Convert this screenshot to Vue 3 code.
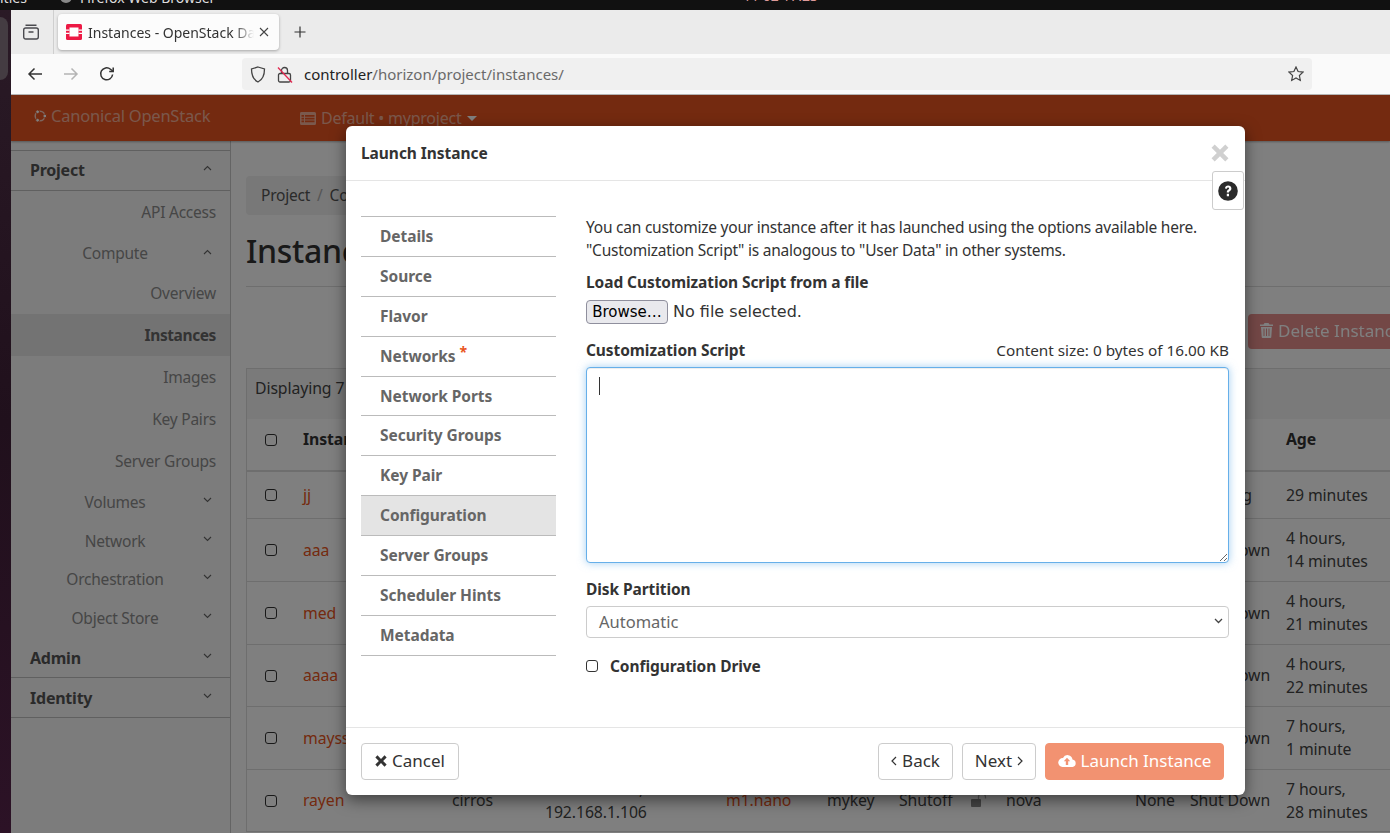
<script setup>
const sideItems = [
  { label: 'API Access', h: 42, kind: 'leaf' },
  { label: 'Compute', h: 40, kind: 'group', open: true },
  { label: 'Overview', h: 41, kind: 'leaf low' },
  { label: 'Instances', h: 42, kind: 'leaf active' },
  { label: 'Images', h: 42, kind: 'leaf' },
  { label: 'Key Pairs', h: 42, kind: 'leaf' },
  { label: 'Server Groups', h: 42, kind: 'leaf' },
  { label: 'Volumes', h: 39, kind: 'group' },
  { label: 'Network', h: 39, kind: 'group' },
  { label: 'Orchestration', h: 39, kind: 'group low' },
  { label: 'Object Store', h: 39, kind: 'group low' }
]
const steps = ['Details', 'Source', 'Flavor', 'Networks', 'Network Ports', 'Security Groups', 'Key Pair', 'Configuration', 'Server Groups', 'Scheduler Hints', 'Metadata']
const rows = [
  { name: 'jj', h: 47, power: 'Running', age: ['29 minutes'] },
  { name: 'aaa', h: 63, power: 'Shut Down', age: ['4 hours,', '14 minutes'] },
  { name: 'med', h: 63, power: 'Shut Down', age: ['4 hours,', '21 minutes'] },
  { name: 'aaaa', h: 62, power: 'Shut Down', age: ['4 hours,', '22 minutes'] },
  { name: 'mayss', h: 63, power: 'Shut Down', age: ['7 hours,', '1 minute'] },
  { name: 'rayen', h: 62, power: 'Shut Down', age: ['7 hours,', '28 minutes'], full: true }
]
</script>

<template>
  <div class="screen">
    <div class="sysbar">
      <span class="sys-a">ities</span>
      <span class="sys-dot"></span>
      <span class="sys-b">Firefox Web Browser</span>
      <span class="sys-c">11 02 17:23</span>
    </div>
    <div class="desk">
      <div class="dock"><div class="dock-item"></div></div>
      <div class="browser">
        <div class="tabs">
          <button class="view-btn" aria-label="Firefox View">
            <svg width="18" height="18" viewBox="0 0 18 18" fill="none" stroke="#4a4a4f" stroke-width="1.4"><rect x="1.700" y="5" width="14.600" height="11" rx="2"/><path d="M3.500 2.200h11M6.500 9h5"/></svg>
          </button>
          <div class="tab">
            <svg class="favicon" width="16" height="16" viewBox="0 0 16 16"><rect width="16" height="16" rx="1.500" fill="#ed1944"/><rect x="3.500" y="3.500" width="9" height="9" fill="#fff"/><path d="M0 6.200h3.500M0 9.400h3.500M12.500 6.200H16M12.500 9.400H16" stroke="#fff" stroke-width="1.200"/></svg>
            <span class="tab-title">Instances - OpenStack Dashboard</span>
            <svg class="tab-x" width="10" height="10" viewBox="0 0 10 10" stroke="#444" stroke-width="1.100"><path d="M1 1l8 8M9 1l-8 8"/></svg>
          </div>
          <svg class="plus" width="12" height="12" viewBox="0 0 12 12" stroke="#333" stroke-width="1.200"><path d="M6 .5v11M.5 6h11"/></svg>
        </div>
        <div class="nav">
          <div class="nav-btns">
            <svg width="16" height="16" viewBox="0 0 16 16" fill="none" stroke="#333" stroke-width="1.500"><path d="M15 8H2M7.500 2.500L2 8l5.500 5.500"/></svg>
            <svg width="16" height="16" viewBox="0 0 16 16" fill="none" stroke="#b4b4b4" stroke-width="1.500"><path d="M1 8h13M8.500 2.500L14 8l-5.500 5.500"/></svg>
            <svg width="16" height="16" viewBox="0 0 16 16" fill="none" stroke="#333" stroke-width="1.500"><path d="M13.600 8.500A6 6 0 1 1 11.500 3.200L14 5.300"/><path d="M14.200 1.500v4h-4"/></svg>
          </div>
          <div class="url">
            <svg class="shield" width="16" height="17" viewBox="0 0 16 17" fill="none" stroke="#444" stroke-width="1.300"><path d="M8 1l6.500 2c0 6.500-1.500 10.500-6.500 13C3 13.500 1.500 9.500 1.500 3z"/></svg>
            <svg class="lock" width="16" height="17" viewBox="0 0 16 17" fill="none" stroke="#444" stroke-width="1.300"><rect x="1.500" y="7.500" width="12" height="8.500" rx="1.500"/><path d="M4.500 7.500V4.500a3 3 0 0 1 6 0v3"/><path d="M1 1.500l14 15" stroke="#e22850"/></svg>
            <span class="url-text"><b>controller</b>/horizon/project/instances/</span>
            <svg class="star" width="16" height="16" viewBox="0 0 16 16" fill="none" stroke="#444" stroke-width="1.200"><path d="M8 1l2.100 4.500 4.900.6-3.600 3.400.9 4.900L8 12l-4.300 2.400.9-4.900L1 6.100l4.900-.6z"/></svg>
          </div>
        </div>
        <div class="page">
          <header class="topnav">
            <div class="brand">
              <svg width="14" height="14" viewBox="0 0 14 14" fill="none"><circle cx="7" cy="7" r="4.800" stroke="#fff" stroke-width="1.500" opacity=".7"/><circle cx="11.800" cy="7" r="1.900" fill="#fff" stroke="#e95420"/><circle cx="4.600" cy="2.800" r="1.900" fill="#fff" stroke="#e95420"/><circle cx="4.600" cy="11.200" r="1.900" fill="#fff" stroke="#e95420"/></svg>
              <span>Canonical OpenStack</span>
            </div>
            <div class="context">
              <svg width="16" height="13" viewBox="0 0 16 13" fill="#fff"><path d="M1.500 0h13A1.500 1.500 0 0 1 16 1.500v10a1.500 1.500 0 0 1-1.500 1.500h-13A1.500 1.500 0 0 1 0 11.500v-10A1.500 1.500 0 0 1 1.500 0zM1.500 3v1.800h2.500V3zM5 3v1.800h9.500V3zM1.500 5.800v1.700h2.500V5.800zM5 5.800v1.700h9.500V5.800zM1.500 8.500v1.800h2.500V8.500zM5 8.500v1.800h9.500V8.500z" fill-rule="evenodd"/></svg>
              <span>Default • myproject</span>
              <i class="tri"></i>
            </div>
          </header>
          <div class="content">
            <aside class="sidebar">
              <div class="side-top"></div>
              <div class="side-head first">
                <span>Project</span>
                <svg class="chev" width="9" height="6" viewBox="0 0 9 6" fill="none" stroke="#666" stroke-width="1.100"><path d="M1 5l3.500-3.500L8 5"/></svg>
              </div>
              <div v-for="item in sideItems" :key="item.label" class="side-item" :class="item.kind" :style="{ height: item.h + 'px' }">
                <span>{{ item.label }}</span>
                <svg v-if="item.kind.startsWith('group')" class="chev" width="9" height="6" viewBox="0 0 9 6" fill="none" stroke="#666" stroke-width="1.100"><path :d="item.open ? 'M1 5l3.500-3.500L8 5' : 'M1 1l3.500 3.500L8 1'"/></svg>
              </div>
              <div class="side-head">
                <span>Admin</span>
                <svg class="chev" width="9" height="6" viewBox="0 0 9 6" fill="none" stroke="#666" stroke-width="1.100"><path d="M1 1l3.500 3.500L8 1"/></svg>
              </div>
              <div class="side-head">
                <span>Identity</span>
                <svg class="chev" width="9" height="6" viewBox="0 0 9 6" fill="none" stroke="#666" stroke-width="1.100"><path d="M1 1l3.500 3.500L8 1"/></svg>
              </div>
            </aside>
            <main class="main">
              <div class="crumb">Project<i>/</i>Compute</div>
              <h1>Instances</h1>
              <div class="actions">
                <span class="delete">
                  <svg width="13" height="15" viewBox="0 0 13 15" fill="currentColor"><path d="M4.500 0h4l1 1.500H13V3H0V1.500h3.500zM1 4h11l-.7 10a1 1 0 0 1-1 1H2.700a1 1 0 0 1-1-1zM3.500 5.500V13h1V5.500zM6 5.500V13h1V5.500zM8.500 5.500V13h1V5.500z" fill-rule="evenodd"/></svg>
                  Delete Instances
                </span>
              </div>
              <div class="table">
                <div class="tbl-info">Displaying 7 items</div>
                <div class="tbl-row tbl-head">
                  <span class="box"></span>
                  <span>Instance Name</span>
                  <span class="age">Age</span>
                </div>
                <div v-for="r in rows" :key="r.name" class="tbl-row" :style="{ height: r.h + 'px' }">
                  <span class="box"></span>
                  <a>{{ r.name }}</a>
                  <template v-if="r.full">
                    <span class="c-image">cirros</span>
                    <span class="c-ip"><em>,</em><br>192.168.1.106</span>
                    <a class="c-flavor">m1.nano</a>
                    <span class="c-key">mykey</span>
                    <span class="c-status">Shutoff</span>
                    <svg class="c-lock" width="18" height="13" viewBox="0 0 18 13" fill="#888"><rect x="0" y="5" width="10" height="8" rx="1"/><path d="M7.500 5V3a3.500 3.500 0 0 1 7 0v1.500" fill="none" stroke="#aaa" stroke-width="1.300"/></svg>
                    <span class="c-az">nova</span>
                    <span class="c-task">None</span>
                  </template>
                  <span class="c-power">{{ r.power }}</span>
                  <span class="age"><template v-for="(line, i) in r.age" :key="i"><br v-if="i">{{ line }}</template></span>
                </div>
              </div>
            </main>
          </div>
          <div class="backdrop"></div>
          <section class="modal">
            <div class="m-head">
              <h2>Launch Instance</h2>
              <svg class="m-close" width="18" height="18" viewBox="0 0 17 17" fill="#d0d0d0"><path d="M3.500.5L8.500 5.500l5-5 3 3-5 5 5 5-3 3-5-5-5 5-3-3 5-5-5-5z"/></svg>
            </div>
            <button class="m-help" aria-label="Help">
              <svg width="20" height="20" viewBox="0 0 20 20"><circle cx="10" cy="10" r="9.800" fill="#2b2b2b"/><path d="M7 7.500C7 5.500 8.500 4.500 10.200 4.500c1.800 0 3.200 1.100 3.200 2.900 0 2.400-2.400 2.400-2.400 4.100H8.800c0-2.900 2.300-2.800 2.300-4 0-.7-.4-1.100-1-1.100-.7 0-1.100.5-1.200 1.300zM8.800 12.800H11v2.400H8.800z" fill="#fff"/></svg>
            </button>
            <div class="m-body">
              <nav class="steps">
                <div v-for="s in steps" :key="s" class="step" :class="{ on: s === 'Configuration' }">
                  {{ s }}<sup v-if="s === 'Networks'">*</sup>
                </div>
              </nav>
              <div class="pane">
                <p class="intro">You can customize your instance after it has launched using the options available here.<br>"Customization Script" is analogous to "User Data" in other systems.</p>
                <label class="lbl load">Load Customization Script from a file</label>
                <div class="file"><span class="browse">Browse…</span><span class="nofile">No file selected.</span></div>
                <div class="script-head">
                  <label class="lbl">Customization Script</label>
                  <span class="size">Content size: 0 bytes of 16.00 KB</span>
                </div>
                <div class="area-wrap">
                  <textarea class="area" aria-label="Customization Script"></textarea>
                  <i class="caret"></i>
                </div>
                <label class="lbl disk">Disk Partition</label>
                <div class="select">
                  <span>Automatic</span>
                  <svg width="9" height="6" viewBox="0 0 9 6" fill="none" stroke="#444" stroke-width="1.300"><path d="M1 1l3.500 3.500L8 1"/></svg>
                </div>
                <div class="drive"><span class="box"></span><label class="lbl">Configuration Drive</label></div>
              </div>
            </div>
            <div class="m-foot">
              <span class="btn cancel">
                <svg width="12" height="12" viewBox="0 0 17 17" fill="#333"><path d="M3.500.5L8.500 5.500l5-5 3 3-5 5 5 5-3 3-5-5-5 5-3-3 5-5-5-5z"/></svg>
                Cancel
              </span>
              <span class="btn back"><svg width="6" height="10" viewBox="0 0 6 10" fill="none" stroke="#333" stroke-width="1.200"><path d="M5 1L1 5l4 4"/></svg>Back</span>
              <span class="btn next">Next<svg width="6" height="10" viewBox="0 0 6 10" fill="none" stroke="#333" stroke-width="1.200"><path d="M1 1l4 4-4 4"/></svg></span>
              <span class="btn launch">
                <svg width="18" height="14" viewBox="0 0 18 14"><path d="M14.500 5.500A5 5 0 0 0 5 4 4.500 4.500 0 0 0 4.500 13h10a3.800 3.800 0 0 0 0-7.500z" fill="#fff"/><path d="M9 3.800l3.200 3.400h-2V11H7.800V7.200h-2z" fill="#f29271"/></svg>
                Launch Instance
              </span>
            </div>
          </section>
        </div>
      </div>
    </div>
  </div>
</template>

<style>
html, body { margin: 0; background: #111; overflow: hidden; }
</style>

<style scoped>
* { box-sizing: border-box; }
.screen {
  width: 1390px; height: 833px; overflow: hidden; display: flex; flex-direction: column;
  font-family: "Noto Sans", sans-serif; font-size: 15.500px; letter-spacing: -.23px; color: #333; background: #111;
}
.sysbar { height: 10px; flex: none; background: #111; color: #ddd; font-size: 14px; line-height: 10px; position: relative; overflow: hidden; display: flex; align-items: flex-start; letter-spacing: 0; }
.sysbar span { display: block; margin-top: -9px; line-height: 14px; }
.sys-a { width: 60px; }
.sysbar .sys-dot { width: 12px; height: 12px; border-radius: 50%; background: #888; margin-top: -9px; }
.sys-b { margin-left: 8px; width: 663px; }
.sysbar .sys-c { color: #d99; margin-top: -11px; }
.desk { flex: 1; display: flex; min-height: 0; }
.dock { width: 11px; flex: none; background: linear-gradient(180deg, #2a1a26, #20101c 50%, #2c1226); padding-top: 7px; }
.dock-item { width: 8px; height: 63px; background: #443c42; border-radius: 0 8px 8px 0; }
.browser { flex: 1; min-width: 0; display: flex; flex-direction: column; }
.tabs { height: 44px; flex: none; background: #ebebeb; display: flex; align-items: center; }
.view-btn { width: 43px; height: 44px; padding: 0 2px 0 0; border: 0; border-right: 1px solid #cfcfcf; background: none; display: flex; align-items: center; justify-content: center; }
.tab { margin-left: 4px; width: 221px; height: 36px; background: #fcfcfc; border-radius: 4px; box-shadow: 0 1px 3px rgba(0,0,0,.3); display: flex; align-items: center; padding-left: 8px; }
.favicon { flex: none; }
.tab-title { margin-left: 6px; width: 166px; white-space: nowrap; overflow: hidden; font-size: 14px; letter-spacing: 0; color: #333; -webkit-mask-image: linear-gradient(90deg, #000 88%, transparent); mask-image: linear-gradient(90deg, #000 88%, transparent); }
.tab-x { margin-left: 5px; flex: none; }
.plus { margin-left: 15px; }
.nav { height: 41px; flex: none; background: #fafafa; border-bottom: 1px solid #b5b5b5; display: flex; align-items: center; padding-left: 16px; }
.nav-btns { width: 215px; display: flex; gap: 20px; }
.url { width: 1070px; height: 32px; background: #f0f0f0; border-radius: 4px; display: flex; align-items: center; padding-left: 8px; }
.lock { margin-left: 11px; }
.url-text { margin-left: 11px; font-size: 15px; letter-spacing: 0; color: #6a6a6a; flex: 1; }
.url-text b { font-weight: 400; color: #222; }
.star { margin-right: 8px; }
.page { flex: 1; min-height: 0; position: relative; overflow: hidden; background: #fff; display: flex; flex-direction: column; }
.topnav { height: 46px; flex: none; background: #e95420; color: rgba(255,255,255,.55); display: flex; align-items: center; padding-left: 22px; font-size: 16px; box-shadow: 0 1px 2px rgba(0,0,0,.3); position: relative; z-index: 1; }
.brand { display: flex; align-items: center; gap: 4px; width: 267px; font-size: 16.500px; margin-top: -5px; }
.context { display: flex; align-items: center; gap: 5px; }
.context svg { opacity: .55; }
.tri { width: 0; height: 0; margin-left: 1px; border: 5px solid transparent; border-top-color: #fff; border-bottom: 0; }
.content { flex: 1; min-height: 0; display: flex; }
.sidebar { width: 220px; flex: none; background: #f8f8f8; border-right: 1px solid #c8c8c8; }
.side-top { height: 10px; border-bottom: 1px solid #c0c0c0; }
.side-head { height: 40px; display: grid; align-items: center; padding-left: 19px; border-bottom: 1px solid #c0c0c0; font-weight: 700; font-size: 16px; color: #555; }
.side-head.first { padding-bottom: 2px; }
.side-head > * { grid-area: 1 / 1; }
.side-head .chev { justify-self: end; margin-right: 18px; margin-top: -3px; }
.side-item { display: grid; align-items: center; color: #8c8c8c; padding-right: 14px; text-align: right; }
.side-item > * { grid-area: 1 / 1; }
.side-item.active { background: #e6e6e6; font-weight: 700; color: #666; letter-spacing: -.4px; }
.side-item.group { padding-right: 11px; text-align: center; }
.side-item.low { padding-bottom: 2px; }
.side-item .chev { justify-self: end; margin-right: 7px; margin-top: -3px; }
.main { flex: 1; min-width: 0; padding-left: 15px; }
.crumb { margin-top: 35px; height: 39px; width: 600px; background: #f0f0f0; border-radius: 4px; padding-left: 15px; line-height: 39px; color: #555; }
.crumb i { color: #aaa; font-style: normal; margin: 0 7px; }
h1 { margin: 0; height: 72px; padding-top: 14px; font-size: 32px; line-height: 44px; font-weight: 500; letter-spacing: -.3px; color: #333; border-bottom: 1px solid #ddd; }
.actions { height: 81px; display: flex; padding-left: 1002px; padding-top: 27px; }
.delete { flex: none; width: 190px; height: 35px; border-radius: 4px; background: #d9534f; color: #fff; opacity: .65; display: flex; align-items: center; gap: 5px; padding: 0 0 2px 12px; white-space: nowrap; font-size: 17px; letter-spacing: 0; }
.table { width: 1300px; border-left: 1px solid #ddd; border-top: 1px solid #ddd; font-size: 15.800px; letter-spacing: -.1px; color: #444; }
.tbl-info { height: 50px; padding: 8px 8px; background: #f5f5f5; }
.tbl-row { height: 53px; display: grid; grid-template-columns: 56px 149px 93px 181px 101px 72px 72px 35px 129px 55px 96px 200px; align-items: center; border-bottom: 1px solid #ddd; line-height: 23px; }
.tbl-head { font-weight: 700; border-bottom-width: 2px; padding-bottom: 10px; color: #333; }
.tbl-row a { color: #e95420; }
.box { width: 12px; height: 12px; margin-left: 18px; border: 1.500px solid #333; border-radius: 3px; background: #fff; }
.c-image { grid-column: 3; }
.c-ip { grid-column: 4; white-space: nowrap; }
.c-ip em { font-style: normal; margin-left: 94px; }
.c-flavor { grid-column: 5; }
.c-key { grid-column: 6; }
.c-status { grid-column: 7; }
.c-lock { grid-column: 8; }
.c-az { grid-column: 9; }
.c-task { grid-column: 10; }
.c-power { grid-column: 11; white-space: nowrap; }
.age { grid-column: 12; white-space: nowrap; }
.backdrop { position: absolute; inset: 0; background: rgba(0,0,0,.5); z-index: 2; }
.modal { position: absolute; left: 335px; top: 31px; width: 899px; height: 669px; background: #fff; border-radius: 6px; box-shadow: 0 5px 15px rgba(0,0,0,.5); z-index: 3; display: flex; flex-direction: column; }
.m-head { height: 55px; flex: none; border-bottom: 1px solid #e5e5e5; display: flex; align-items: center; justify-content: space-between; padding: 0 16px 0 15px; }
h2 { margin: 0; font-size: 15.500px; letter-spacing: -.05px; font-weight: 700; color: #333; }
.m-help { position: absolute; right: 1px; top: 45px; width: 32px; height: 39px; padding: 0; background: #fff; border: 1px solid #ccc; border-radius: 3px; display: flex; align-items: center; justify-content: center; }
.m-body { flex: 1; min-height: 0; display: flex; padding: 35px 16px 0 15px; }
.steps { width: 195px; flex: none; border-top: 1px solid #bbb; align-self: flex-start; letter-spacing: -.05px; }
.step { height: 39.900px; padding-left: 19px; line-height: 38px; font-weight: 700; color: #666; border-bottom: 1px solid #bbb; }
.step.on { background: #e4e4e4; }
.step sup { color: #e95420; font-size: 14px; line-height: 0; margin-left: 4px; vertical-align: 5px; }
.pane { flex: 1; min-width: 0; margin-left: 30px; }
.intro { margin: 0; line-height: 23px; white-space: nowrap; }
.lbl { font-weight: 700; display: block; color: #333; letter-spacing: -.08px; }
.load { margin-top: 9px; line-height: 23px; }
.file { margin-top: 6px; height: 23px; display: flex; align-items: center; font-family: "DejaVu Sans", sans-serif; letter-spacing: 0; }
.browse { width: 82px; height: 24px; border: 1px solid #8f8f9d; border-radius: 4px; background: #e9e9ed; color: #000; display: flex; align-items: center; justify-content: center; font-size: 15px; }
.nofile { margin-left: 5px; font-size: 16px; }
.script-head { margin-top: 15px; height: 23px; display: flex; justify-content: space-between; align-items: center; }
.size { font-size: 15.300px; letter-spacing: 0; }
.area-wrap { position: relative; margin-top: 6px; height: 196px; }
.area { display: block; width: 100%; height: 100%; padding: 0; outline: 0; resize: vertical; border: 1px solid #66afe9; border-radius: 4px; box-shadow: inset 0 1px 1px rgba(0,0,0,.075), 0 0 8px rgba(102,175,233,.6); background: #fff; }
.caret { position: absolute; left: 13px; top: 10px; width: 1px; height: 18px; background: #333; }
.disk { margin-top: 15px; line-height: 23px; }
.select { margin-top: 5px; height: 32px; border: 1px solid #ccc; border-radius: 4px; display: flex; align-items: center; justify-content: space-between; padding: 0 5px 2px 12px; color: #666; font-size: 16.500px; letter-spacing: 0; }
.drive { margin-top: 17px; display: flex; align-items: center; }
.drive .box { margin: 0 12px 0 0; }
.m-foot { height: 68px; flex: none; border-top: 1px solid #e5e5e5; display: flex; align-items: center; padding: 0 21px 0 15px; }
.btn { height: 37px; padding-bottom: 2px; border: 1px solid #ccc; border-radius: 4px; display: flex; align-items: center; justify-content: center; gap: 5px; background: #fff; color: #333; font-size: 17px; letter-spacing: 0; }
.cancel { width: 98px; margin-right: auto; }
.back { width: 75px; margin-right: 9px; }
.next { width: 74px; margin-right: 9px; }
.launch { width: 179px; border-color: #f29271; background: #f29271; color: #fff; }
</style>
